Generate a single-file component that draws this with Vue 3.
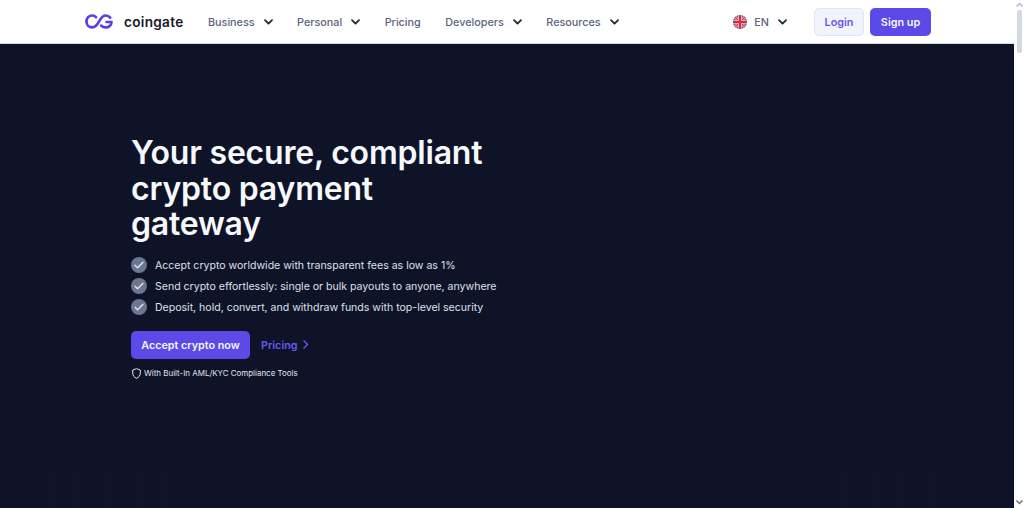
<script setup>
const navItems = [
  { label: 'Business', chevron: true },
  { label: 'Personal', chevron: true },
  { label: 'Pricing', chevron: false },
  { label: 'Developers', chevron: true },
  { label: 'Resources', chevron: true },
]
const bullets = [
  'Accept crypto worldwide with transparent fees as low as 1%',
  'Send crypto effortlessly: single or bulk payouts to anyone, anywhere',
  'Deposit, hold, convert, and withdraw funds with top-level security',
]
</script>

<template>
  <div class="window">
    <div class="page">
      <header class="topbar">
        <div class="brand">
          <svg class="logo" width="28" height="15" viewBox="0 0 28 15" fill="none">
            <path d="M11 3.2C9.9 2 8.7 1.5 7.2 1.5C3.9 1.5 1.5 4 1.5 7.4C1.5 10.9 4 13.4 7.2 13.4C9.8 13.4 11.4 11.8 12.9 9.4L15.2 5.6C16.6 3.2 18 1.5 20.7 1.5C22.7 1.5 24.1 2.2 25.2 3.6" stroke="#5a3fe6" stroke-width="2.7" stroke-linecap="round"/>
            <path d="M16.2 11.6C17.3 12.9 18.8 13.4 20.6 13.4C24 13.4 26.4 11.2 26.5 8H21.6" stroke="#5a3fe6" stroke-width="2.7" stroke-linecap="round" stroke-linejoin="round"/>
          </svg>
          <span class="wordmark">coingate</span>
        </div>
        <nav class="nav">
          <a v-for="item in navItems" :key="item.label" class="nav-item">
            <span class="label">{{ item.label }}</span>
            <svg v-if="item.chevron" class="chev" width="9" height="6" viewBox="0 0 9 6" fill="none">
              <path d="M1 1.1L4.5 4.6L8 1.1" stroke="#1f2937" stroke-width="1.8" stroke-linecap="round" stroke-linejoin="round"/>
            </svg>
          </a>
        </nav>
        <div class="right">
          <div class="lang">
            <svg class="flag" width="14" height="14" viewBox="0 0 14 14">
              <defs><clipPath id="flagclip"><circle cx="7" cy="7" r="7"/></clipPath></defs>
              <g clip-path="url(#flagclip)">
                <rect width="14" height="14" fill="#5a6aa8"/>
                <path d="M0 0L14 14M14 0L0 14" stroke="#f3f0f0" stroke-width="2.6"/>
                <path d="M0 0L14 14M14 0L0 14" stroke="#e0364a" stroke-width="1.5"/>
                <path d="M7 0V14M0 7H14" stroke="#f3f0f0" stroke-width="3.4"/>
                <path d="M7 0V14M0 7H14" stroke="#e0283c" stroke-width="2.3"/>
              </g>
            </svg>
            <span class="lang-text label">EN</span>
            <svg class="lang-chev" width="9" height="6" viewBox="0 0 9 6" fill="none">
              <path d="M1 1.1L4.5 4.6L8 1.1" stroke="#1f2937" stroke-width="1.8" stroke-linecap="round" stroke-linejoin="round"/>
            </svg>
          </div>
          <a class="btn-login">Login</a>
          <a class="btn-signup">Sign up</a>
        </div>
      </header>
      <main class="hero">
        <div class="stripes stripes-left"></div>
        <div class="stripes stripes-right"></div>
        <div class="hero-inner">
          <h1 class="title">Your secure, compliant crypto payment gateway</h1>
          <ul class="list">
            <li v-for="b in bullets" :key="b" class="list-item">
              <span class="tick">
                <svg width="10" height="8" viewBox="0 0 10 8" fill="none">
                  <path d="M1 4.2L3.6 6.8L9 1.2" stroke="#e5e7eb" stroke-width="1.3" stroke-linecap="round" stroke-linejoin="round"/>
                </svg>
              </span>
              <span class="label">{{ b }}</span>
            </li>
          </ul>
          <div class="actions">
            <a class="btn-primary">Accept crypto now</a>
            <a class="link">
              <span class="label">Pricing</span>
              <svg width="6" height="9" viewBox="0 0 6 9" fill="none">
                <path d="M1 1L4.5 4.5L1 8" stroke="#6a5af0" stroke-width="1.4" stroke-linecap="round" stroke-linejoin="round"/>
              </svg>
            </a>
          </div>
          <div class="note">
            <svg width="9" height="11" viewBox="0 0 9 11" fill="none">
              <path d="M4.5 0.7L8.3 2V5.2C8.3 7.6 6.7 9.4 4.5 10.3C2.3 9.4 0.7 7.6 0.7 5.2V2L4.5 0.7Z" stroke="#e5e7eb" stroke-width="1" stroke-linejoin="round"/>
            </svg>
            <span>With Built-In AML/KYC Compliance Tools</span>
          </div>
        </div>
      </main>
    </div>
    <aside class="scrollbar">
      <svg class="arrow" width="9" height="6" viewBox="0 0 9 6" fill="none"><path d="M1.5 4.5L4.5 1.5L7.5 4.5" stroke="#b4b9c2" stroke-width="1.5"/></svg>
      <div class="thumb"></div>
      <svg class="arrow arrow-bottom" width="9" height="6" viewBox="0 0 9 6" fill="none"><path d="M1.5 1.5L4.5 4.5L7.5 1.5" stroke="#6b7280" stroke-width="1.5"/></svg>
    </aside>
  </div>
</template>

<style>
html, body { margin: 0; padding: 0; overflow: hidden; }
</style>

<style scoped>
.window {
  width: 1024px;
  height: 508px;
  display: flex;
  font-family: Inter, "Liberation Sans", sans-serif;
  overflow: hidden;
}
.page {
  width: 1014px;
  display: flex;
  flex-direction: column;
}
.label { padding-top: 2px; }
.topbar {
  height: 43px;
  flex: none;
  background: #fff;
  border-bottom: 1px solid #d7dae3;
  display: flex;
  align-items: center;
  padding-left: 85px;
}
.brand {
  display: flex;
  align-items: center;
  gap: 11px;
  width: 123px;
}
.logo { flex: none; }
.wordmark {
  font-size: 13.6px;
  font-weight: 600;
  letter-spacing: 0.3px;
  color: #16182a;
}
.nav {
  display: flex;
  align-items: center;
  gap: 24.5px;
}
.nav-item {
  display: flex;
  align-items: center;
  gap: 9px;
  font-size: 10.8px;
  font-weight: 500;
  color: #5b6480;
}
.right {
  margin-left: auto;
  display: flex;
  align-items: center;
  padding-right: 83px;
}
.lang {
  display: flex;
  align-items: center;
  font-size: 10.8px;
  font-weight: 500;
  color: #5b6480;
  margin-right: 27px;
}
.flag { margin-left: 1px; }
.lang-text { margin-left: 7px; }
.lang-chev { margin-left: 9px; }
.btn-login, .btn-signup {
  height: 28px;
  box-sizing: border-box;
  border-radius: 5px;
  display: flex;
  align-items: center;
  justify-content: center;
  padding-top: 2px;
  font-size: 10.8px;
  font-weight: 600;
}
.btn-login {
  width: 50px;
  background: #f1f3ff;
  border: 1px solid #dfe3fb;
  color: #6a5ae0;
  margin-right: 6px;
}
.btn-signup {
  width: 61px;
  background: #5b4ae8;
  color: #f5f4ff;
}
.hero {
  flex: 1;
  position: relative;
  background: #0e1328;
  padding: 91px 0 0 131px;
}
.stripes {
  position: absolute;
  top: 426px;
  bottom: 0;
  background: repeating-linear-gradient(90deg, #11132a 0 6px, #0f1329 6px 11px);
}
.stripes-left { left: 50px; width: 120px; }
.stripes-right { left: 830px; width: 120px; }
.hero-inner { position: relative; width: 400px; }
.title {
  margin: 0;
  font-size: 32px;
  line-height: 35.5px;
  font-weight: 600;
  letter-spacing: -0.2px;
  color: #f7f8fb;
  width: 370px;
}
.list {
  list-style: none;
  margin: 15px 0 0;
  padding: 0;
  display: flex;
  flex-direction: column;
  gap: 5px;
}
.list-item {
  display: flex;
  align-items: center;
  gap: 8px;
  height: 16px;
  font-size: 10.56px;
  color: #dde0e9;
  white-space: nowrap;
}
.tick {
  width: 16px;
  height: 16px;
  border-radius: 50%;
  background: #6b7690;
  display: flex;
  align-items: center;
  justify-content: center;
  flex: none;
}
.actions {
  display: flex;
  align-items: center;
  margin-top: 16px;
}
.btn-primary {
  width: 119px;
  height: 28px;
  box-sizing: border-box;
  padding-top: 2px;
  border-radius: 5px;
  background: #5b4ae8;
  color: #f5f4ff;
  font-size: 10.75px;
  font-weight: 600;
  display: flex;
  align-items: center;
  justify-content: center;
}
.link {
  margin-left: 11px;
  display: flex;
  align-items: center;
  gap: 5px;
  font-size: 10.75px;
  font-weight: 600;
  color: #6a5af0;
}
.note {
  display: flex;
  align-items: center;
  gap: 3px;
  margin-top: 9px;
  margin-left: 1px;
  font-size: 7.95px;
  font-weight: 400;
  color: #e3e5ec;
}
.scrollbar {
  width: 10px;
  flex: none;
  background: #fff;
  display: flex;
  flex-direction: column;
  align-items: center;
}
.arrow { flex: none; margin-top: 2px; }
.arrow-bottom { margin-top: auto; margin-bottom: 3px; }
.thumb {
  width: 5px;
  height: 43px;
  border-radius: 2px;
  background: #d3dae5;
  margin-top: 2px;
}
</style>
